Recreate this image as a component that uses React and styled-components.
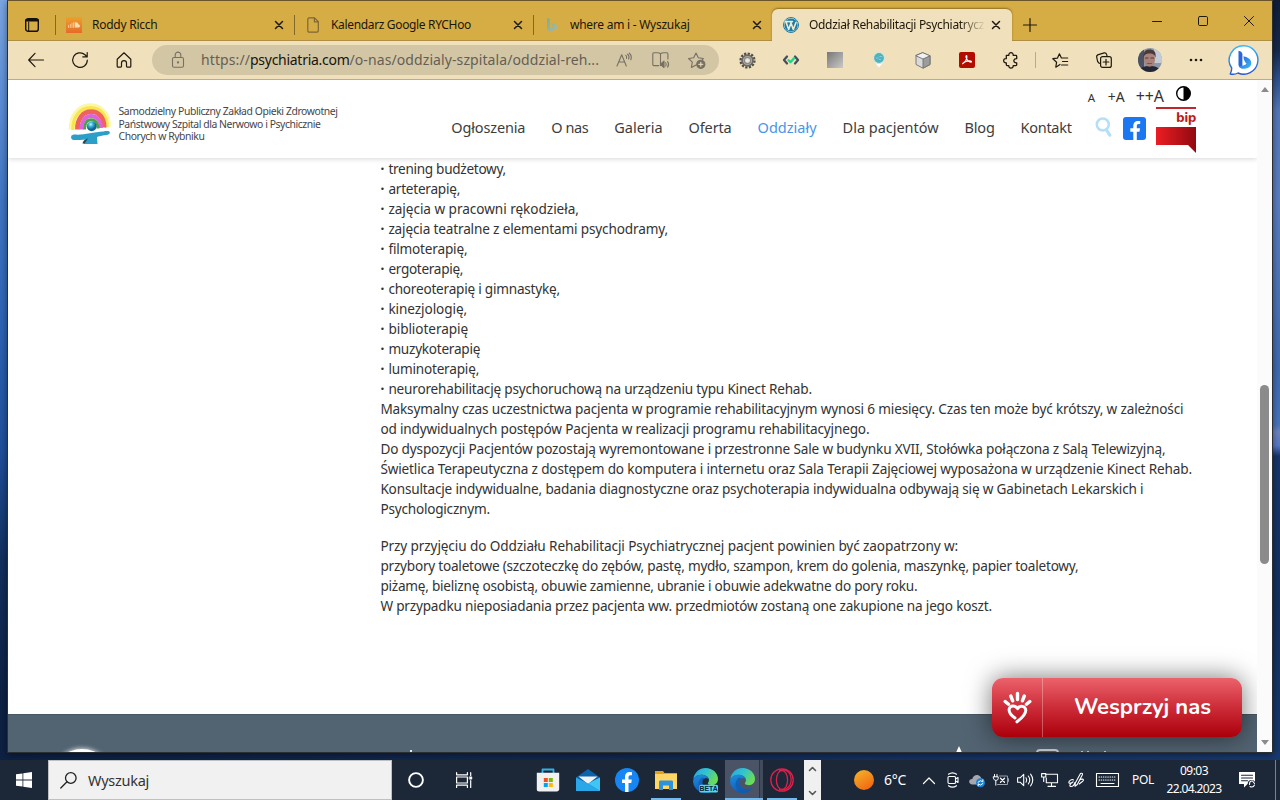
import React, { useLayoutEffect, useRef, useState } from "react";
import styled, { createGlobalStyle, css } from "styled-components";

const Global = createGlobalStyle`
  * { box-sizing: border-box; }
  body { margin: 0; overflow: hidden; font-family: "Noto Sans", "Open Sans", sans-serif; }
  svg { display: block; flex: none; overflow: visible; }
  p { margin: 0; }
`;

/* ---------- text that keeps a fixed measure ---------- */
const FitSpan = styled.span`
  display: inline-block;
  white-space: pre;
`;

function Fit({ width, children, ...rest }) {
  const ref = useRef(null);
  const [spacing, setSpacing] = useState(0);
  useLayoutEffect(() => {
    const natural = ref.current.getBoundingClientRect().width;
    setSpacing((width - natural) / ref.current.textContent.length);
  }, [width]);
  return (
    <FitSpan ref={ref} style={{ letterSpacing: `${spacing}px` }} {...rest}>
      {children}
    </FitSpan>
  );
}

/* ---------- desktop and window ---------- */
const Desktop = styled.div`
  width: 1280px;
  height: 800px;
  display: flex;
  flex-direction: column;
  overflow: hidden;
  background:
    linear-gradient(90deg, #0d2144 0, #12294f 600px, #163467 1000px, #18396f 1280px) bottom / 100% 48px no-repeat,
    linear-gradient(180deg, #7ba6e2 0, #5f90d8 90px, #3f76c4 200px, #2c64b4 330px, #1f509c 450px, #12305f 560px, #0d2144 700px, #0d2144 800px) left / 640px 100% no-repeat,
    linear-gradient(180deg, #101d38 0, #17294b 50px, #2c4f8c 78px, #5478b8 110px, #5a7fc0 200px, #3f6bb0 370px, #4675bd 425px, #6d83bd 432px, #5577c6 446px, #17356d 456px, #143060 600px, #173a70 800px) right / 640px 100% no-repeat;
`;

const Window = styled.div`
  width: 1266px;
  height: 753px;
  margin-left: 7px;
  flex: none;
  border: 1px solid #2b2f33;
  border-top-color: #69552a;
  box-shadow: 0 2px 7px rgba(0, 0, 0, 0.45);
  display: flex;
  flex-direction: column;
`;

const TabStrip = styled.div`
  height: 40px;
  flex: none;
  background: #d6ad45;
  border-bottom: 1px solid #ae8f45;
  display: flex;
  align-items: flex-end;
`;

const TabMenu = styled.div`
  width: 47px;
  height: 31px;
  display: flex;
  align-items: center;
  justify-content: center;
`;

const Tab = styled.div`
  width: ${(p) => (p.$active ? 240 : 239)}px;
  height: ${(p) => (p.$active ? 32 : 31)}px;
  margin-bottom: ${(p) => (p.$active ? -1 : 0)}px;
  display: flex;
  align-items: center;
  position: relative;
  padding-left: ${(p) => (p.$active ? 11 : 10)}px;
  font-size: 12px;
  color: #1c160a;
  ${(p) =>
    p.$active
      ? css`
          background: #f0e1bc;
          border-radius: 6px 6px 0 0;
          box-shadow: 0 -1px 2px rgba(90, 65, 10, 0.6);
          clip-path: inset(-4px -4px 0 -4px);
        `
      : css`
          border-left: 1px solid #82692a;
          height: 20px;
          margin-bottom: 5px;
        `}
`;

const TabTitle = styled.div`
  width: 175px;
  margin-left: 10px;
  overflow: hidden;
  white-space: nowrap;
  line-height: 20px;
  ${(p) => p.$fade && "mask-image: linear-gradient(90deg, #000 150px, transparent 177px);"}
`;

const TabClose = styled.div`
  width: 24px;
  display: flex;
  justify-content: center;
`;

const NewTab = styled.div`
  width: 36px;
  height: 31px;
  display: flex;
  align-items: center;
  justify-content: center;
`;

const Caption = styled.div`
  margin-left: auto;
  align-self: flex-start;
  display: flex;
`;

const CaptionButton = styled.div`
  width: 46px;
  height: 40px;
  display: flex;
  align-items: center;
  justify-content: center;
`;

const Toolbar = styled.div`
  height: 39px;
  flex: none;
  background: #f0e1bc;
  border-bottom: 1px solid #b9ad90;
  display: flex;
  align-items: center;
  padding-left: 6px;
`;

const ToolButton = styled.div`
  width: ${(p) => p.$w || 44}px;
  height: 38px;
  display: flex;
  align-items: center;
  justify-content: center;
  flex: none;
`;

const Address = styled.div`
  width: 567px;
  height: 30px;
  margin: 0 6px;
  border-radius: 15px;
  background: #d3c6a5;
  display: flex;
  align-items: center;
  padding-left: 17px;
  font-size: 14px;
  color: #645f56;
`;

const Url = styled.div`
  width: 404px;
  margin: -1px 0 0 14px;
  display: flex;
  white-space: nowrap;
  b { font-weight: 400; color: #17140e; }
`;

const ToolDivider = styled.div`
  width: 1px;
  height: 16px;
  margin: 0 2px;
  background: #b8ab8c;
`;

const Avatar = styled.div`
  width: 24px;
  height: 24px;
  border-radius: 50%;
  overflow: hidden;
`;

/* ---------- page ---------- */
const Viewport = styled.div`
  flex: 1;
  min-height: 0;
  display: flex;
  background: #fff;
`;

const Page = styled.div`
  width: 1249px;
  height: 100%;
  overflow: hidden;
  position: relative;
  display: flex;
  flex-direction: column;
`;

const Header = styled.header`
  height: 78px;
  flex: none;
  display: flex;
  padding-left: 61px;
  box-shadow: 0 1px 5px rgba(0, 0, 0, 0.16);
`;

const Brand = styled.div`
  width: 382px;
  padding-top: 22px;
  display: flex;
`;

const BrandName = styled.div`
  margin: 3px 0 0 6.5px;
  font-size: 10.4px;
  line-height: 12.5px;
  color: #45454a;
  display: flex;
  flex-direction: column;
  align-items: flex-start;
`;

const Nav = styled.nav`
  display: flex;
  gap: 26px;
  padding: 37px 0 0 0.3px;
  font-size: 14.5px;
  line-height: 20px;
  color: #3d3d3d;
`;

const NavItem = styled.span`
  display: flex;
  color: ${(p) => (p.$active ? "#4596ea" : "inherit")};
`;

const Tools = styled.div`
  margin-left: 7.7px;
  width: 120px;
  display: flex;
  flex-direction: column;
`;

const Sizes = styled.div`
  height: 26px;
  padding: 0 6px 0 0;
  display: flex;
  align-items: baseline;
  color: #333;
  line-height: 32px;
  svg { align-self: flex-start; margin: 6px 0 0 12px; }
`;

const SizeLink = styled.span`
  font-size: ${(p) => p.$size}px;
  margin-left: ${(p) => p.$gap || 0}px;
  display: inline-flex;
`;

const Badges = styled.div`
  display: flex;
  align-items: flex-start;
  padding-left: 16px;
`;

const BadgeSlot = styled.div`
  padding-top: ${(p) => p.$top}px;
  margin-right: ${(p) => p.$gap || 0}px;
`;

const Bip = styled.div`
  width: 40px;
  border-top: 2px solid #c2262d;
  font: 800 13.5px/17px "Nunito", "Open Sans", sans-serif;
  color: #bb1a22;
  display: flex;
  flex-direction: column;
  align-items: flex-end;
  margin-top: 1px;
  span { height: 18px; }
`;

const Article = styled.article`
  flex: 1;
  padding: 1px 0 0 372.4px;
  font-size: 13.6px;
  line-height: 20px;
  color: #333;
`;

const Paragraph = styled.p`
  display: flex;
  flex-direction: column;
  align-items: flex-start;
  margin-bottom: 17px;
`;

const Line = styled.span`
  height: 20px;
  display: flex;
`;

const Bullet = styled.span`
  width: 8px;
  font-weight: 700;
`;

const Footer = styled.footer`
  height: 38px;
  flex: none;
  background: #526371;
  display: flex;
  overflow: hidden;
  color: #fff;
  border-top: 1px solid #475763;
`;

const FooterGlow = styled.div`
  width: 60px;
  height: 60px;
  margin: 34px 0 0 44px;
  border-radius: 50%;
  background: #fff;
  box-shadow: 0 0 4px 1px rgba(255, 255, 255, 0.7);
`;

const FooterTick = styled.div`
  width: 2px;
  height: 4px;
  margin: 35px 0 0 298px;
  background: #e8ebee;
`;

const FooterStar = styled.div`
  width: 0;
  height: 0;
  margin: 31px 0 0 542px;
  border: 5px solid transparent;
  border-top: 0;
  border-bottom: 11px solid #fff;
`;

const FooterBox = styled.div`
  width: 23px;
  height: 18px;
  margin: 34px 0 0 72px;
  border: 2px solid #c9cdd1;
  border-radius: 4px;
`;

const FooterMarks = styled.div`
  margin: 36px 0 0 22px;
  height: 2px;
  display: flex;
  gap: 4px;
  i { width: 2px; background: #c2c9cf; }
  i:last-child { margin-left: 11px; }
`;

const Support = styled.div`
  position: absolute;
  left: 984px;
  top: 598px;
  width: 250px;
  height: 59px;
  border-radius: 11px;
  background: linear-gradient(#ec626b, #cc2c38 50%, #ab000b);
  box-shadow: 0 0 26px rgba(0, 0, 0, 0.55);
  display: flex;
  align-items: center;
  color: #fff;
  font: 700 22px/30px "Nunito", "Open Sans", sans-serif;
`;

const SupportIcon = styled.div`
  width: 51px;
  height: 100%;
  border-right: 1px solid rgba(255, 255, 255, 0.3);
  display: flex;
  align-items: center;
  justify-content: center;
`;

const SupportLabel = styled.div`
  padding-left: 31px;
  margin-top: -2px;
`;

const Scrollbar = styled.div`
  width: 15px;
  background: #fbfbfb;
  display: flex;
  flex-direction: column;
  align-items: center;
  padding: 7px 0 7px;
`;

const Thumb = styled.div`
  width: 9px;
  height: 179px;
  margin: 293px 0 auto;
  border-radius: 5px;
  background: #8b8b8b;
`;

const Arrow = styled.div`
  border: 4.5px solid transparent;
  ${(p) => (p.$up ? "border-top: 0; border-bottom: 5px solid #8b8b8b;" : "border-bottom: 0; border-top: 5px solid #8b8b8b;")}
`;

/* ---------- taskbar ---------- */
const Taskbar = styled.div`
  height: 40px;
  margin-top: 7px;
  flex: none;
  display: flex;
  background: #1c2738;
  color: #fff;
  position: relative;
`;

const TaskCell = styled.div`
  width: ${(p) => p.$w}px;
  height: 40px;
  flex: none;
  display: flex;
  align-items: center;
  justify-content: center;
  margin-left: ${(p) => p.$gap || 0}px;
  background: ${(p) => (p.$active ? "linear-gradient(90deg, #4a5466 34px, #2b3546 34px, #2b3546 35px, #414b5c 35px)" : "transparent")};
  ${(p) => p.$active && "padding-right: 4px;"}
  ${(p) => p.$running && "box-shadow: inset 0 -2px #76b9ed;"}
`;

const Search = styled.div`
  width: 344px;
  height: 40px;
  background: #f1f1f1;
  border: 1px solid #bfc0c2;
  display: flex;
  align-items: center;
  padding-left: 11px;
  font-size: 14.5px;
  color: #333;
`;

const SearchText = styled.span`
  margin-left: 11px;
`;

const Scroller = styled.div`
  width: 17px;
  height: 40px;
  margin-left: 7px;
  background: #f0f0f0;
  display: flex;
  flex-direction: column;
  align-items: center;
  justify-content: space-between;
  padding: 7px 0 5px;
`;

const TrayText = styled.div`
  width: ${(p) => p.$w}px;
  margin-left: ${(p) => p.$gap}px;
  font-size: ${(p) => p.$size || 12}px;
  line-height: 40px;
`;

const Clock = styled.div`
  width: 56px;
  margin-left: 10px;
  padding-top: 2px;
  font-size: 12px;
  line-height: 18px;
  display: flex;
  flex-direction: column;
  align-items: center;
`;

const ShowDesktop = styled.div`
  width: 5px;
  height: 40px;
  margin-left: auto;
  border-left: 1px solid #7b828d;
`;

/* ---------- icons ---------- */
function Icon({ w = 18, h = w, box, stroke = "none", sw = 1.2, fill = "none", children }) {
  return (
    <svg width={w} height={h} viewBox={box || `0 0 ${w} ${h}`} fill={fill} stroke={stroke} strokeWidth={sw} strokeLinecap="round" strokeLinejoin="round">
      {children}
    </svg>
  );
}

const ink = "#1f1a10";
const soft = "#777063";

const CloseX = ({ s = 8, sw = 1.5 }) => (
  <Icon w={s} stroke={ink} sw={sw}><path d={`M.5.5l${s - 1} ${s - 1}M${s - 0.5}.5l-${s - 1} ${s - 1}`} /></Icon>
);

const TabMenuIcon = () => (
  <Icon w={14} stroke="#15110a" sw={1.4}>
    <rect x=".7" y=".7" width="12.6" height="12.6" rx="2.4" />
    <path d="M1.5 2.3h11" strokeWidth="2.6" /><path d="M3.7 4v9" strokeWidth="1" />
  </Icon>
);

const SoundCloud = () => (
  <Icon w={16}>
    <defs><linearGradient id="sc" x2="0" y2="1"><stop stopColor="#eda02e" /><stop offset="1" stopColor="#e76a2a" /></linearGradient></defs>
    <rect width="16" height="16" fill="url(#sc)" />
    <path d="M2.5 8.5v2M4.3 7.5v3M6 6.5v4M7.6 5.7v4.8" stroke="#f7dcae" strokeWidth=".8" />
    <path d="M8.7 5.4c2-.8 3.4.4 3.6 1.8 1 0 1.6.8 1.6 1.7 0 1-.7 1.7-1.7 1.7H8.7z" fill="#f7dcae" />
  </Icon>
);

const PageIcon = () => (
  <Icon w={12} h={16} stroke="#7d6636" sw={1.2}><path d="M2.2.8h5.3l3.8 3.9v9.1c0 .8-.5 1.3-1.3 1.3H2.2c-.8 0-1.4-.5-1.4-1.3V2.2C.8 1.4 1.4.8 2.2.8zM7.4.9V4.8h3.8" /></Icon>
);

const BingSmall = () => (
  <Icon w={10} h={14}>
    <defs><linearGradient id="bs" y2="1"><stop stopColor="#76b096" /><stop offset="1" stopColor="#a9b9a6" /></linearGradient></defs>
    <path d="M0 0l3 1.1v9.4l3-1.7-1.9-4L10 7v3.500L4 14 0 11.8z" fill="url(#bs)" />
  </Icon>
);

const WordPress = () => (
  <Icon w={16}>
    <circle cx="8" cy="8" r="7.5" fill="#f3ead0" stroke="#1b7da8" strokeWidth="1" />
    <circle cx="8" cy="8" r="6.6" fill="#1b7da8" />
    <path d="M3 5l2.7 7.500L8 6l2.300 6.500L13 5.500M2.200 4.600h3M6.300 4.600h3.200" stroke="#f3ead0" strokeWidth="1.6" />
  </Icon>
);

const Gear = () => (
  <Icon w={17} box="-8.5 -8.5 17 17">
    <circle r="6.9" stroke="#4f4c47" strokeWidth="2.4" strokeDasharray="2.2 1.41" strokeLinecap="butt" />
    <circle r="5.4" fill="#b4b2ae" stroke="#6b6965" strokeWidth="1.6" />
    <circle r="3.2" fill="#d6d4d0" stroke="#8b8984" /><circle r="1.6" fill="#f4ead0" />
  </Icon>
);

const Cube = () => (
  <Icon w={16} h={17} stroke="#707070" sw={0.9}>
    <path d="M8 .8l7 3v8.7l-7 3.7-7-3.700V3.800z" fill="#d9d9d9" />
    <path d="M8 7v9.200l7-3.700V3.800z" fill="#9c9c9c" /><path d="M1 3.800L8 7l7-3.200L8 .8z" fill="#f1f1f1" />
  </Icon>
);

const Photo = () => (
  <Avatar>
    <Icon w={24}>
      <rect width="24" height="24" fill="#8d99a6" />
      <rect x="16" width="8" height="15" fill="#c3ccd6" /><rect width="6" height="24" fill="#4b5262" />
      <path d="M1 24c1-4.500 5-6 10.500-6s10 1 11 6z" fill="#252737" />
      <ellipse cx="11.5" cy="11" rx="5.600" ry="7.800" fill="#a98279" />
      <path d="M5.600 10C4.800 4 7.500 1.500 11.500 1.500s7 2 6 8.500C16.800 6.600 15 5.600 11.500 5.600S6.400 6.700 5.600 10z" fill="#4a3a3a" />
      <path d="M7.500 10h2.500M13 10h2.500" stroke="#53393c" strokeWidth="1.200" /><path d="M9.500 15.500h4" stroke="#7d5550" />
    </Icon>
  </Avatar>
);

const BingChat = () => (
  <Icon w={30}>
    <defs>
      <linearGradient id="bc" x2="0" y2="1"><stop stopColor="#39b8f5" /><stop offset="1" stopColor="#2456d8" /></linearGradient>
      <linearGradient id="bb" x2="1" y2="1"><stop stopColor="#2a5fdd" /><stop offset="1" stopColor="#38bdf3" /></linearGradient>
    </defs>
    <path d="M15 .8A14.2 14.2 0 1 1 9 28c-2.600 1.400-5 1.600-7.800 1 .8-1.600 1.600-3.500 1.500-6A14.200 14.200 0 0 1 15 .8z" fill="#fff" stroke="url(#bc)" strokeWidth="1.4" />
    <path d="M9.500 5.700c2.500.6 3.900 1.700 3.900 3.800v14c-2.500-.3-3.900-1.800-3.900-4.200z" fill="#2667df" />
    <path d="M14.500 11.200c4.800 1 7.800 3.200 7.800 6.900s-3.800 6.300-8.400 5.600c-1.900-.3-3.300-1.400-4.100-3 3 .8 5.500-.2 7.700-1.900-1.800-1.900-3-4.700-3-7.600z" fill="url(#bb)" />
  </Icon>
);

const HospitalLogo = () => (
  <Icon w={43} h={43} box="1 0 43 43">
    <defs><radialGradient id="ball" cx=".4" cy=".3"><stop stopColor="#c4f4ff" /><stop offset=".5" stopColor="#33aed4" /><stop offset="1" stopColor="#11688f" /></radialGradient></defs>
    <g strokeLinecap="butt">
      <path d="M2.500 27.500C2 13 11 3 22.500 3S42 13 41 24.500" stroke="#fcf6a8" strokeWidth="3.500" />
      <path d="M5 28C4.500 15 12 5.700 22.500 5.700S39.500 14 39 25" stroke="#f8e64e" strokeWidth="3.400" />
      <path d="M9.500 27.500C9 17 15 9.700 23 9.700S36.500 16 36 25.500" stroke="#f0625c" strokeWidth="4.800" />
      <path d="M13.500 27.500c0-8 3.500-13.500 9.500-13.500s10 5 10 12" stroke="#dd62e0" strokeWidth="3.800" />
      <path d="M16.500 27.500c0-6 2.500-9.800 6.700-9.800 4.300 0 7 4 6.800 8.800" stroke="#4fa048" strokeWidth="3" />
    </g>
    <path d="M3.500 33.600c1-1 3-1.400 6-.9 8 0 16-2.700 26-3.200 4-.8 6.800-.4 6.300 1.500-.6 2.300-5 2-8 2.800-3 .6-5 .7-4.800 2L29.500 42H15.500l2.700-4.600c-5 .3-9 .7-12.700.6-2.500-.4-2.800-2.600-2-4.400z" fill="#2c9fc9" />
    <path d="M14.500 41.500c.3-2.500 2.500-4.500 5.500-5l-3.500 5z" fill="#26424f" />
    <circle cx="23.700" cy="24.300" r="4.900" fill="url(#ball)" />
  </Icon>
);

const Facebook = () => (
  <Icon w={23}>
    <rect width="23" height="23" rx="3" fill="#1b77f2" />
    <path d="M10.300 23v-8.200H7.300v-3.500h3V8.700c0-3.100 1.800-4.800 4.600-4.800 1.300 0 2.300.2 2.300.2v3h-1.500c-1.500 0-1.900.9-1.900 1.900v2.300h3.300l-.6 3.500h-2.700V23z" fill="#fff" />
  </Icon>
);

const HandHeart = () => (
  <Icon w={29} h={33} stroke="#fff" sw={3}>
    <path d="M2.200 10.500l3.300 2.700M7.800 5l1.900 4.800M14.500 2.500v6M21.300 5l-1.900 4.800M26.800 10.500l-3.300 2.700" strokeWidth="3.400" />
    <path d="M12 27c-4.500-3-6.300-6-5.800-9 .9-3.900 6.200-4.100 8.300-.4 2.300-3.700 7.900-2.700 8.300 1.500.2 4.800-4.800 8.700-8.800 11.700" />
  </Icon>
);

const Edge = ({ beta }) => (
  <Icon w={25} box="0 0 24 24">
    <defs>
      <linearGradient id="e1" x2="1" y2=".5"><stop stopColor="#2f9fe2" /><stop offset=".5" stopColor="#2fc3d2" /><stop offset="1" stopColor="#6bdc55" /></linearGradient>
      <linearGradient id="e2" y2="1" x2=".4"><stop stopColor="#1c8fe0" /><stop offset="1" stopColor="#1159b6" /></linearGradient>
    </defs>
    <path d="M.3 10.500C1.300 4.300 6 0 12 0c7 0 12 4.800 12 10.600 0 3.700-2.800 5.900-5.800 5.900-3.300 0-4.700-1.400-3.600-2.800C17 10 13 6.400 8.600 6.400c-3.600 0-6.600 1.500-8.300 4.100z" fill="url(#e1)" />
    <path d="M.1 11.700C1.200 8.200 4.600 6.400 8.600 6.400c3 0 5.700 1.600 6.400 4-3-1.800-6.300.6-6.100 4.200.3 4.700 6.300 7.300 12.700 4.100C19.200 22.300 15.800 24 12 24 5.300 24-.4 18.300.1 11.700z" fill="url(#e2)" />
    <path d="M8 9.500c-3 2.800-3.500 7.300-1 10.700 1.600 2.200 3.800 3.400 6.200 3.700 3.700-.2 6.600-2 8.400-4.800-6 3-12.200.6-12.500-4.500 0-1.900.8-3.300 2-4.300-.8-.9-2-1.300-3.100-.8z" fill="#135dae" opacity=".8" />
    <circle cx="12" cy="12.800" r="2.700" fill={beta ? "#1c2b3a" : "#4a5466"} />
    {beta && (
      <>
        <rect x="6" y="16" width="18" height="7.500" rx="1.500" fill="#4ed8f5" />
        <text x="15" y="22.200" textAnchor="middle" fontFamily="Liberation Sans" fontWeight="700" fontSize="6.600" fill="#0b2336">BETA</text>
      </>
    )}
  </Icon>
);

const lists = [
  ["trening budżetowy,", 505.5], ["arteterapię,", 459.7], ["zajęcia w pracowni rękodzieła,", 578.5],
  ["zajęcia teatralne z elementami psychodramy,", 667.5], ["filmoterapię,", 467], ["ergoterapię,", 462.7],
  ["choreoterapię i gimnastykę,", 559.5], ["kinezjologię,", 466.7], ["biblioterapię", 467.7], ["muzykoterapię", 479.7],
  ["luminoterapię,", 478.7], ["neurorehabilitację psychoruchową na urządzeniu typu Kinect Rehab.", 811.5],
];
const intro = [
  ["Maksymalny czas uczestnictwa pacjenta w programie rehabilitacyjnym wynosi 6 miesięcy. Czas ten może być krótszy, w zależności", 1183],
  ["od indywidualnych postępów Pacjenta w realizacji programu rehabilitacyjnego.", 869],
  ["Do dyspozycji Pacjentów pozostają wyremontowane i przestronne Sale w budynku XVII, Stołówka połączona z Salą Telewizyjną,", 1165],
  ["Świetlica Terapeutyczna z dostępem do komputera i internetu oraz Sala Terapii Zajęciowej wyposażona w urządzenie Kinect Rehab.", 1191.5],
  ["Konsultacje indywidualne, badania diagnostyczne oraz psychoterapia indywidualna odbywają się w Gabinetach Lekarskich i", 1143],
  ["Psychologicznym.", 489.5],
];
const admission = [
  ["Przy przyjęciu do Oddziału Rehabilitacji Psychiatrycznej pacjent powinien być zaopatrzony w:", 957.7],
  ["przybory toaletowe (szczoteczkę do zębów, pastę, mydło, szampon, krem do golenia, maszynkę, papier toaletowy,", 1078],
  ["piżamę, bieliznę osobistą, obuwie zamienne, ubranie i obuwie adekwatne do pory roku.", 917],
  ["W przypadku nieposiadania przez pacjenta ww. przedmiotów zostaną one zakupione na jego koszt.", 991.5],
];
const nav = [["Ogłoszenia", 74], ["O nas", 37], ["Galeria", 48.3], ["Oferta", 43], ["Oddziały", 59], ["Dla pacjentów", 96], ["Blog", 30], ["Kontakt", 51]];
const tabs = [["Roddy Ricch", 65.5, <SoundCloud />], ["Kalendarz Google RYCHoo", 140, <PageIcon />], ["where am i - Wyszukaj", 119.5, <BingSmall />]];

const FavSlot = styled.div`
  width: 16px;
  display: flex;
  justify-content: center;
`;

const Lines = ({ rows, bullet }) => rows.map(([t, end]) => (
  <Line key={t}>
    {bullet && <Bullet>·</Bullet>}
    <Fit width={end - 380 - (bullet ? 8 : 0)}>{t}</Fit>
  </Line>
));

export default function App() {
  return (
    <Desktop>
      <Global />
      <Window>
        <TabStrip>
          <TabMenu><TabMenuIcon /></TabMenu>
          {tabs.map(([title, w, icon]) => (
            <Tab key={title}>
              <FavSlot>{icon}</FavSlot>
              <TabTitle><Fit width={w}>{title}</Fit></TabTitle>
              <TabClose><CloseX /></TabClose>
            </Tab>
          ))}
          <Tab $active>
            <FavSlot><WordPress /></FavSlot>
            <TabTitle $fade><Fit width={175}>Oddział Rehabilitacji Psychiatrycz</Fit></TabTitle>
            <TabClose><CloseX /></TabClose>
          </Tab>
          <NewTab><Icon w={14} stroke={ink} sw={1.2}><path d="M7 .5v13M.5 7h13" /></Icon></NewTab>
          <Caption>
            <CaptionButton><Icon w={10} stroke={ink} sw={1}><path d="M.5 5.5h9" /></Icon></CaptionButton>
            <CaptionButton><Icon w={10} stroke={ink} sw={1}><rect x=".5" y=".5" width="9" height="9" rx="1.2" /></Icon></CaptionButton>
            <CaptionButton><CloseX s={10} sw={1} /></CaptionButton>
          </Caption>
        </TabStrip>

        <Toolbar>
          <ToolButton><Icon w={16} stroke={ink}><path d="M15.5 8H.7M7 1.3L.7 8 7 14.7" /></Icon></ToolButton>
          <ToolButton><Icon w={16} stroke={ink}><path d="M15.3 8.2A7.3 7.3 0 1 1 13 2.8l2 1.9M15.2.6v4.3h-4.4" /></Icon></ToolButton>
          <ToolButton><Icon w={16} stroke={ink}><path d="M1.2 7.2L8 .8l6.8 6.4v7c0 .6-.3.9-.9.9h-2.6c-.5 0-.8-.3-.8-.8v-3.2c0-3.2-5-3.2-5 0v3.2c0 .5-.3.8-.8.8H2.1c-.6 0-.9-.3-.9-.9z" /></Icon></ToolButton>
          <Address>
            <Icon w={18} stroke={soft} sw={1.1}><rect x="3.5" y="6.5" width="11" height="9.8" rx="1.6" /><path d="M6.2 6.5V4c0-3.8 5.6-3.8 5.6 0v2.5" /><circle cx="9" cy="11.4" r=".6" fill={soft} /></Icon>
            <Url>
              <Fit width={49}>https://</Fit><b><Fit width={99.5}>psychiatria.com</Fit></b><Fit width={249.5}>/o-nas/oddzialy-szpitala/oddzial-reh...</Fit>
            </Url>
            <ToolButton $w={38}>
              <Icon w={16} h={14} stroke={soft} sw={1.1}><path d="M1 13L5.7 1.8 10.3 13M2.7 9h6M9.8 2.4c.9.8 1 2 .7 3M11.6 1.2c1.5 1.2 1.7 3.2 1 4.8M13.3.2c1.9 1.5 2.4 4 1.5 6.5" /></Icon>
            </ToolButton>
            <ToolButton $w={36}>
              <Icon w={18} h={16} stroke={soft} sw={1.1}><path d="M8.500 1.500V13M8.500 1.800C7.500 1 6.500.8 5.500.8H1.800c-.6 0-1 .4-1 1v10.800c0 .6.4 1 1 1h5M8.500 1.800c.9-.7 1.800-1 3-1h3.400c.6 0 1 .4 1 1V7" /><path d="M8.500 11.200h1.300L12 9.200v6.300l-2.200-2H8.500z" fill={soft} /><path d="M13.700 10.700q1 1.600 0 3.300M15.600 9.500q2 2.800 0 5.600" /></Icon>
            </ToolButton>
            <ToolButton $w={36}>
              <Icon w={18} h={17} stroke={soft} sw={1.1}><path d="M8 13l-4.600 2.400.9-5.200L.6 6.500l5.100-.8L8 1l2.300 4.700 5.100.8-1.200 1.300" /><circle cx="12.800" cy="12.300" r="4.100" fill={soft} /><path d="M12.800 10.300v4M10.800 12.300h4" stroke="#e0d4b5" strokeWidth="1.2" /></Icon>
            </ToolButton>
          </Address>
          <ToolButton><Gear /></ToolButton>
          <ToolButton><Icon w={16} h={10} sw={2.3} stroke="#444f5e"><path d="M4 1.500L1 5l3 3.500M12 1.500L15 5l-3 3.500" /><path d="M5.500 5.200l2 2 3.500-4" stroke="#1bd58a" /></Icon></ToolButton>
          <ToolButton><Icon w={16}><defs><linearGradient id="gs" x2="1" y2="1"><stop stopColor="#777" /><stop offset="1" stopColor="#c9c9c9" /></linearGradient></defs><rect width="16" height="16" fill="url(#gs)" /></Icon></ToolButton>
          <ToolButton><Icon w={12} h={16}><path d="M6 15.600L1.200 9.500h9.600z" fill="#fff" /><circle cx="6" cy="6" r="5.500" fill="#50b2c0" stroke="#d5e7dc" /><path d="M3.500 6h2M6.800 4.500h2M6.500 7.500h1" stroke="#86ced4" /></Icon></ToolButton>
          <ToolButton><Cube /></ToolButton>
          <ToolButton><Icon w={16}><rect width="16" height="16" rx="2" fill="#b30b00" /><path d="M3.500 11.800c2.200-1 5-5.300 4.400-7.800-.6-1.200-1.300.2-.7 1.800.9 2.400 2.700 4.200 4.700 4.400 1.300-.2.500-1.300-1.400-1.300-2.600 0-5.500.9-7 2.900z" stroke="#fff" strokeWidth="1.1" /></Icon></ToolButton>
          <ToolButton><Icon w={16} stroke={ink} sw={1.3}><path d="M3.300 3.400h2.500C5.300-.3 10.700-.3 10.200 3.400h2.700c.5 0 .8.3.8.8v2.500c-3.800-.6-3.800 4.600 0 4.100v2c0 .5-.3.8-.8.8h-2.700c.4 3.300-4.800 3.300-4.400 0H4.100c-.5 0-.8-.3-.8-.8v-2C-.2 11.200-.2 6 3.300 6.600z" /></Icon></ToolButton>
          <ToolDivider />
          <ToolButton><Icon w={17} h={15} stroke={ink}><path d="M8 11.500l-4.200 2.700.8-5L.8 5.700l4.700-.6L7.400.8l2 4.200h6.300M10.500 8.500h5.200M9.500 12h6.200" /></Icon></ToolButton>
          <ToolButton><Icon w={16} stroke={ink}><path d="M4 11.500c-1.700-.4-2-.9-2.400-2.200L.7 5.200C.4 3.700 1 3 2.400 2.600L8.200.9c1.300-.3 2 .2 2.400 1.500l.4 1.300" /><rect x="4.600" y="4.700" width="10.700" height="10.700" rx="2" /><path d="M10 7.300V13M7.200 10h5.600" /></Icon></ToolButton>
          <ToolButton $w={48}><Photo /></ToolButton>
          <ToolButton><Icon w={14} h={4} fill={ink}><circle cx="2" cy="2" r="1.3" /><circle cx="7" cy="2" r="1.3" /><circle cx="12" cy="2" r="1.3" /></Icon></ToolButton>
          <ToolButton $w={52}><BingChat /></ToolButton>
        </Toolbar>

        <Viewport>
          <Page>
            <Header>
              <Brand>
                <HospitalLogo />
                <BrandName>
                  <Fit width={219}>Samodzielny Publiczny Zakład Opieki Zdrowotnej</Fit>
                  <Fit width={202}>Państwowy Szpital dla Nerwowo i Psychicznie</Fit>
                  <Fit width={86}>Chorych w Rybniku</Fit>
                </BrandName>
              </Brand>
              <Nav>
                {nav.map(([t, w]) => <NavItem key={t} $active={t === "Oddziały"}><Fit width={w}>{t}</Fit></NavItem>)}
              </Nav>
              <Tools>
                <Sizes>
                  <SizeLink $size={11.5} $gap={8.5}><Fit width={8}>A</Fit></SizeLink>
                  <SizeLink $size={14} $gap={12}><Fit width={17}>+A</Fit></SizeLink>
                  <SizeLink $size={16} $gap={11}><Fit width={28}>++A</Fit></SizeLink>
                  <Icon w={15}><circle cx="7.5" cy="7.5" r="6.8" fill="#fff" stroke="#000" strokeWidth="1.4" /><path d="M7.5.7a6.8 6.8 0 0 1 0 13.600z" fill="#000" /></Icon>
                </Sizes>
                <Badges>
                  <BadgeSlot $top={11} $gap={11}><Icon w={17} h={20} stroke="#b3dffb" sw={2.5}><circle cx="7.8" cy="7.5" r="6" /><path d="M11.500 13l3.300 5.200" strokeWidth="3.2" /></Icon></BadgeSlot>
                  <BadgeSlot $top={11} $gap={10}><Facebook /></BadgeSlot>
                  <Bip>
                    <span><Fit width={20}>bip</Fit></span>
                    <Icon w={40} h={26}><defs><linearGradient id="bp" x2="1"><stop stopColor="#ed1c24" /><stop offset="1" stopColor="#8f0a10" /></linearGradient></defs><path d="M0 0h40v26l-8-8H0z" fill="url(#bp)" /></Icon>
                  </Bip>
                </Badges>
              </Tools>
            </Header>
            <Article>
              <Paragraph><Lines rows={lists} bullet /><Lines rows={intro} /></Paragraph>
              <Paragraph><Lines rows={admission} /></Paragraph>
            </Article>
            <Footer><FooterGlow /><FooterTick /><FooterStar /><FooterBox /><FooterMarks><i /><i /><i /></FooterMarks></Footer>
            <Support>
              <SupportIcon><HandHeart /></SupportIcon>
              <SupportLabel><Fit width={137}>Wesprzyj nas</Fit></SupportLabel>
            </Support>
          </Page>
          <Scrollbar><Arrow $up /><Thumb /><Arrow /></Scrollbar>
        </Viewport>
      </Window>

      <Taskbar>
        <TaskCell $w={48}><Icon w={16} fill="#fff"><path d="M0 2.300l6.500-.9v6.200H0zM7.300 1.300L16 0v7.600H7.300zM0 8.400h6.500v6.200L0 13.700zM7.300 8.400H16V16l-8.700-1.200z" /></Icon></TaskCell>
        <Search>
          <Icon w={17} stroke="#222" sw={1.3}><circle cx="10.8" cy="6" r="5.3" /><path d="M7 9.800L.8 16" /></Icon>
          <SearchText><Fit width={61}>Wyszukaj</Fit></SearchText>
        </Search>
        <TaskCell $w={48}><Icon w={16} stroke="#fff" sw={1.9}><circle cx="8" cy="8" r="6.9" /></Icon></TaskCell>
        <TaskCell $w={48}><Icon w={17} h={16} stroke="#fff" sw={1.2}><path d="M.6.5v2.300h10.800V.5M.6 15.500v-2.300h10.800v2.300M.6 5h10.800v6H.6zM14.700.5v3M14.700 8.500v7" /><rect x="13.500" y="4.800" width="2.400" height="2.400" fill="#fff" strokeWidth="0.5" /></Icon></TaskCell>

        <TaskCell $w={40} $gap={40}><Icon w={24}><path d="M6.500 6V1.500h11V6" stroke="#2fb3ea" strokeWidth="1.8" /><path d="M.8 4.800h22.400V21c0 1.500-1 2.500-2.500 2.500H3.300A2.400 2.400 0 0 1 .8 21z" fill="#f1f1f1" /><path d="M7.800 10h4v4h-4z" fill="#f25022" /><path d="M12.800 10h4v4h-4z" fill="#7fba00" /><path d="M7.800 15h4v4h-4z" fill="#00a4ef" /><path d="M12.800 15h4v4h-4z" fill="#ffb900" /></Icon></TaskCell>
        <TaskCell $w={39}><Icon w={24} h={22}><path d="M0 8.500L12 0l12 8.500V22H0z" fill="#0a63ad" /><path d="M2.500 7.500h19L12 15z" fill="#f2f2f2" /><path d="M0 8.500l12 6L24 22H0z" fill="#2aa7e8" /><path d="M12 14.500L24 8.500V22z" fill="#3fc6f3" /></Icon></TaskCell>
        <TaskCell $w={39}><Icon w={24}><circle cx="12" cy="12" r="12" fill="#1586f3" /><path d="M10 24v-9H7v-3.500h3V8.800C10 5.700 11.800 4 14.500 4c1.300 0 2.500.2 2.500.2v3h-1.500c-1.500 0-2 .9-2 1.900v2.400h3.300l-.5 3.500h-2.800v9z" fill="#fff" /></Icon></TaskCell>
        <TaskCell $w={30} $gap={5} $running><Icon w={22} h={19}><path d="M0 0h8l1.500 2H22v6H0z" fill="#e3a01b" /><path d="M0 3h22v15H0z" fill="#ffd666" /><path d="M4 19v-8c0-1 .5-1.500 1.500-1.500h11c1 0 1.500.5 1.500 1.500v8h-4v-4.500H8V19z" fill="#2b92dc" /></Icon></TaskCell>
        <TaskCell $w={38} $gap={5}><Edge beta /></TaskCell>
        <TaskCell $w={38} $gap={1} $active $running><Edge /></TaskCell>
        <TaskCell $w={30} $gap={4} $running><Icon w={24} stroke="#e0204c" sw={1.3}><circle cx="12" cy="12" r="11.2" /><ellipse cx="12" cy="12" rx="5.6" ry="9.5" /><path d="M9.500 2.500C17.500-.5 22 6.500 21 14c-.9 5.500-6.500 9.500-11.500 7.500" /></Icon></TaskCell>
        <Scroller>
          <Icon w={7} h={4} stroke="#555" sw={1.6}><path d="M.5 3.500l3-3 3 3" /></Icon>
          <Icon w={7} h={4} stroke="#555" sw={1.6}><path d="M.5.5l3 3 3-3" /></Icon>
        </Scroller>

        <TaskCell $w={30} $gap={28}><Icon w={20}><defs><linearGradient id="sun" x2=".6" y2="1"><stop stopColor="#f5b62b" /><stop offset="1" stopColor="#f16b12" /></linearGradient></defs><circle cx="10" cy="10" r="10" fill="url(#sun)" /></Icon></TaskCell>
        <TrayText $w={24} $gap={5} $size={14}><Fit width={22}>6°C</Fit></TrayText>
        <TaskCell $w={24} $gap={9}><Icon w={12} h={7} stroke="#fff" sw={1.2}><path d="M.5 6.500L6 1l5.500 5.500" /></Icon></TaskCell>
        <TaskCell $w={24}><Icon w={12} h={16} stroke="#fff" sw={1.1}><rect x="1" y="4.500" width="7.500" height="7" rx="1" /><path d="M8.500 7l2.500-1.500v5L8.500 9M1.500 2.300q4-2.800 8 0M1.500 13.700q4 2.800 8 0" /></Icon></TaskCell>
        <TaskCell $w={24}><Icon w={16} h={14}><path d="M3 11.500c-4-.5-3.600-5.500.3-5.400C4.300.8 11.300.7 12.300 5.500c3.800.2 3.500 5.500 0 6z" fill="#a5a9af" /><circle cx="11.500" cy="9.800" r="4.500" fill="#1681d9" /><path d="M9 9.200q2.500-3 4.800-.4v-2M14 10.500q-2.500 3-4.800.4v2" stroke="#fff" strokeWidth="1" /></Icon></TaskCell>
        <TaskCell $w={24}><Icon w={16} h={12} stroke="#fff" sw={1}><path d="M1.500.5v2M4 .5v2M.5 2.800h4.700v1.700c0 2.500-4.700 2.500-4.700 0zM2.800 6.500v4.700" /><path d="M6.500 2h8v8.500h-10M14.500 4.500h1v3.200h-1" stroke="#9ba2ac" /><path d="M7.500 4.200l4 4M11.500 4.200l-4 4" strokeWidth="1.3" /></Icon></TaskCell>
        <TaskCell $w={24}><Icon w={17} h={14} stroke="#fff" sw={1.1}><path d="M.6 4.800h2.500l3.600-3.500v11.400L3.100 9.200H.6zM9 4.800q1.500 2.200 0 4.400M11.300 3q3 4 0 8M13.600 1.200q4.300 5.800 0 11.600" /></Icon></TaskCell>
        <TaskCell $w={24}><Icon w={17} h={14} stroke="#fff" sw={1.1}><path d="M4.500 1.300h12v8.500H5.300V5M10.500 10v3M7 13.400h7.500M.6.600h4.200V4H.6zM2.700 4v4.500" /></Icon></TaskCell>
        <TaskCell $w={31}><Icon w={17} h={16} stroke="#fff" sw={1.1}><path d="M7.300 11L12.500 1.500c1.500-.8 2.400.1 1.900 1.300L9.300 12.500l-2.300 1.700zM5.500 8c-1.500-1.500-4.700 1-4.700 2.500 0 1.400 3.300.4 4.200-.7M4 10.500c-2.500 2-2.800 3.800-1 4 2 .2 3.500-2.500 4-4M11.500 8c2-1.500 4.500-1 3.800.5-.5 1-2 1.500-4 3.500" /></Icon></TaskCell>
        <TaskCell $w={31}><Icon w={23} h={14} stroke="#fff" sw={1.1}><rect x=".5" y=".5" width="22" height="13" /><path d="M3 4h17M3 7h17" strokeDasharray=".5 1.7" /><path d="M5 10.500h13" /></Icon></TaskCell>
        <TrayText $w={24} $gap={9}><Fit width={22}>POL</Fit></TrayText>
        <Clock><Fit width={28}>09:03</Fit><Fit width={55}>22.04.2023</Fit></Clock>
        <TaskCell $w={24} $gap={13}><Icon w={17} h={16}><path d="M0 0h16v12H8.500L5 15.500V12H0z" fill="#fff" /><path d="M2.500 3.200h11M2.500 6h11M2.500 8.800h6" stroke="#1c2738" strokeWidth="1.1" /><circle cx="12.500" cy="11.800" r="3.800" fill="#1c2738" /><path d="M10.500 12.500q0-4 3-3.500l2 2.500M11 14.500q3 1.500 4.500-1.500" stroke="#fff" strokeWidth="1.1" /></Icon></TaskCell>
        <ShowDesktop />
      </Taskbar>
    </Desktop>
  );
}
